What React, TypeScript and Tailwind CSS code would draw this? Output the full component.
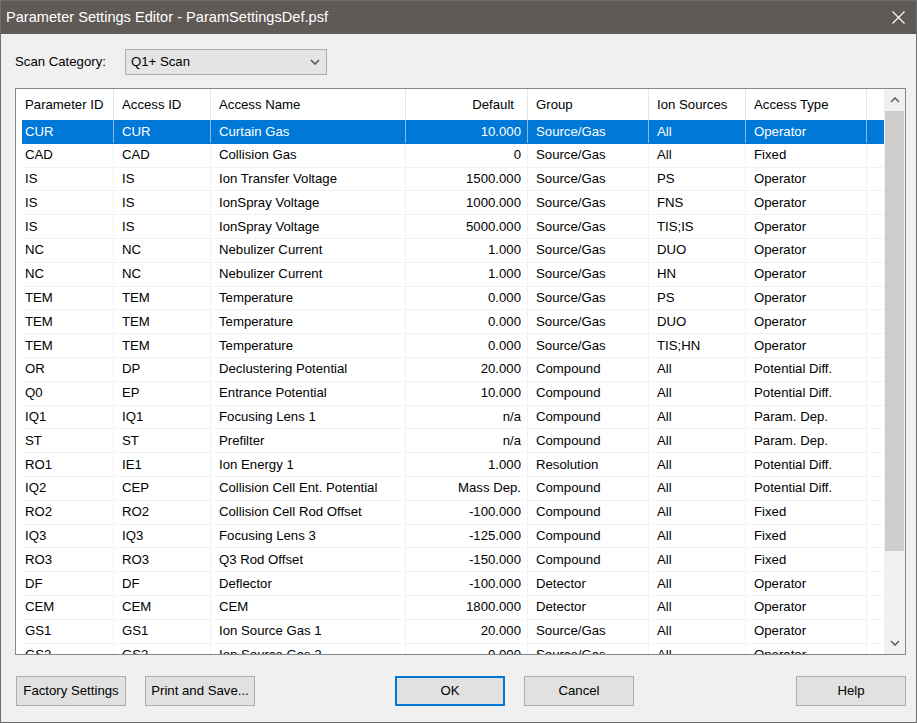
import React from "react";

type Row = [string, string, string, string, string, string, string];

const rows: Row[] = [
  ["CUR", "CUR", "Curtain Gas", "10.000", "Source/Gas", "All", "Operator"],
  ["CAD", "CAD", "Collision Gas", "0", "Source/Gas", "All", "Fixed"],
  ["IS", "IS", "Ion Transfer Voltage", "1500.000", "Source/Gas", "PS", "Operator"],
  ["IS", "IS", "IonSpray Voltage", "1000.000", "Source/Gas", "FNS", "Operator"],
  ["IS", "IS", "IonSpray Voltage", "5000.000", "Source/Gas", "TIS;IS", "Operator"],
  ["NC", "NC", "Nebulizer Current", "1.000", "Source/Gas", "DUO", "Operator"],
  ["NC", "NC", "Nebulizer Current", "1.000", "Source/Gas", "HN", "Operator"],
  ["TEM", "TEM", "Temperature", "0.000", "Source/Gas", "PS", "Operator"],
  ["TEM", "TEM", "Temperature", "0.000", "Source/Gas", "DUO", "Operator"],
  ["TEM", "TEM", "Temperature", "0.000", "Source/Gas", "TIS;HN", "Operator"],
  ["OR", "DP", "Declustering Potential", "20.000", "Compound", "All", "Potential Diff."],
  ["Q0", "EP", "Entrance Potential", "10.000", "Compound", "All", "Potential Diff."],
  ["IQ1", "IQ1", "Focusing Lens 1", "n/a", "Compound", "All", "Param. Dep."],
  ["ST", "ST", "Prefilter", "n/a", "Compound", "All", "Param. Dep."],
  ["RO1", "IE1", "Ion Energy 1", "1.000", "Resolution", "All", "Potential Diff."],
  ["IQ2", "CEP", "Collision Cell Ent. Potential", "Mass Dep.", "Compound", "All", "Potential Diff."],
  ["RO2", "RO2", "Collision Cell Rod Offset", "-100.000", "Compound", "All", "Fixed"],
  ["IQ3", "IQ3", "Focusing Lens 3", "-125.000", "Compound", "All", "Fixed"],
  ["RO3", "RO3", "Q3 Rod Offset", "-150.000", "Compound", "All", "Fixed"],
  ["DF", "DF", "Deflector", "-100.000", "Detector", "All", "Operator"],
  ["CEM", "CEM", "CEM", "1800.000", "Detector", "All", "Operator"],
  ["GS1", "GS1", "Ion Source Gas 1", "20.000", "Source/Gas", "All", "Operator"],
  ["GS2", "GS2", "Ion Source Gas 2", "0.000", "Source/Gas", "All", "Operator"],
];

const headers = ["Parameter ID", "Access ID", "Access Name", "Default", "Group", "Ion Sources", "Access Type", ""];

const cols = "grid grid-cols-[92px_97px_195px_122px_121px_97px_121px_17px]";

function Chevron({ up, className }: { up?: boolean; className?: string }) {
  return (
    <svg width="10" height="6" viewBox="0 0 10 6" className={className}>
      <polyline
        points={up ? "1,5 5,1 9,5" : "1,1 5,5 9,1"}
        fill="none"
        stroke="currentColor"
        strokeWidth="1.6"
      />
    </svg>
  );
}

function Button({ label, primary, className = "" }: { label: string; primary?: boolean; className?: string }) {
  return (
    <button
      className={`h-[30px] w-[110px] bg-[#e1e1e1] text-[13.2px] text-black ${
        primary ? "border-2 border-[#0078d7]" : "border border-[#adadad]"
      } ${className}`}
    >
      {label}
    </button>
  );
}

// first column has a small inset, the others a wider one
function cellPad(i: number) {
  if (i === 0) return "pl-[3px]";
  if (i === 3) return "justify-end pr-[6px]";
  return "pl-[8px]";
}

export default function App() {
  return (
    <div
      className="w-[917px] h-[723px] border border-[#6e6e6e] bg-[#f0f0f0] flex flex-col overflow-hidden"
      style={{ fontFamily: '"Liberation Sans", Arial, sans-serif' }}
    >
      {/* title bar */}
      <div className="h-[33px] shrink-0 bg-[#5f5a57] flex items-center justify-between pl-[5px] pr-[11px]">
        <span className="text-white text-[14.6px]">Parameter Settings Editor - ParamSettingsDef.psf</span>
        <svg width="13" height="13" viewBox="0 0 13 13">
          <path d="M0.5 0.5 L12.5 12.5 M12.5 0.5 L0.5 12.5" stroke="white" strokeWidth="1.1" />
        </svg>
      </div>

      <div className="flex-1 flex flex-col pl-[14px] pr-[10px] pt-[15px] pb-[16px] text-[13.2px] text-black">
        {/* scan category */}
        <div className="flex items-center h-[26px]">
          <span className="w-[110px]">Scan Category:</span>
          <div className="w-[202px] h-[26px] bg-[#e5e5e5] border border-[#acacac] flex items-center justify-between pl-[5px] pr-[6px]">
            <span>Q1+ Scan</span>
            <Chevron className="text-[#555]" />
          </div>
        </div>

        {/* list */}
        <div className="mt-[13px] h-[567px] border border-[#828790] bg-white flex overflow-hidden">
          <div className="pl-[6px] flex-1 overflow-hidden">
            <div className={`${cols} h-[31px]`}>
              {headers.map((h, i) => (
                <div
                  key={i}
                  className={`flex items-center ${i === 7 ? "" : "border-r border-[#e5e5e5]"} ${
                    i === 3 ? "justify-end pr-[13px]" : cellPad(i)
                  }`}
                >
                  {h}
                </div>
              ))}
            </div>
            {rows.map((r, ri) => {
              const sel = ri === 0;
              return (
                <div
                  key={ri}
                  className={`${cols} h-[23.8px] border-b ${
                    sel ? "bg-[#0078d7] text-white border-[#0078d7]" : "border-[#f2f2f2]"
                  }`}
                >
                  {[...r, ""].map((c, ci) => (
                    <div
                      key={ci}
                      className={`flex items-center whitespace-nowrap overflow-hidden ${
                        ci === 7 ? "" : sel ? "border-r border-[#8ab8e6]" : "border-r border-[#f2f2f2]"
                      } ${cellPad(ci)}`}
                    >
                      {c}
                    </div>
                  ))}
                </div>
              );
            })}
          </div>

          {/* scrollbar */}
          <div className="w-[21px] shrink-0 bg-[#f0f0f0] flex flex-col">
            <div className="h-[22px] flex items-center justify-center text-[#606060]">
              <Chevron up />
            </div>
            <div className="h-[440px] mx-[1px] bg-[#cdcdcd]" />
            <div className="flex-1" />
            <div className="h-[22px] flex items-center justify-center text-[#606060]">
              <Chevron />
            </div>
          </div>
        </div>

        {/* buttons */}
        <div className="mt-[21px] flex items-center">
          <Button label="Factory Settings" className="ml-[1px]" />
          <Button label="Print and Save..." className="ml-[19px]" />
          <Button label="OK" primary className="ml-[140px]" />
          <Button label="Cancel" className="ml-[19px]" />
          <Button label="Help" className="ml-auto" />
        </div>
      </div>
    </div>
  );
}
